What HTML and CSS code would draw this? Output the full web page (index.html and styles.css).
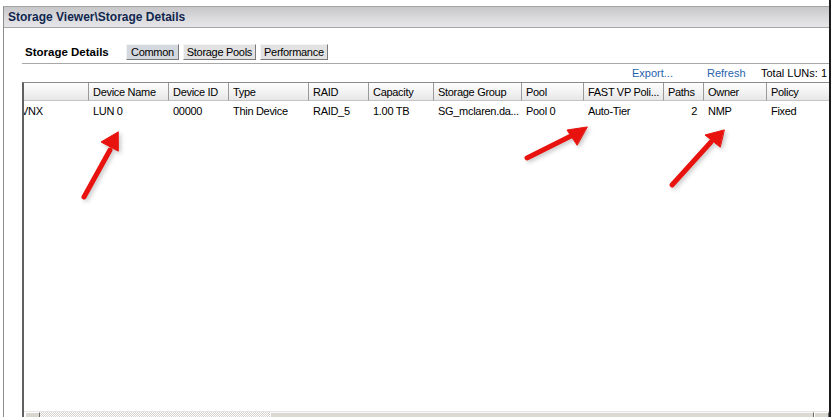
FILE: index.html
```html
<!DOCTYPE html>
<html lang="en">
<head>
    <meta charset="UTF-8">
    <title>Storage Viewer - Storage Details</title>
    <link rel="stylesheet" href="styles.css">
</head>
<body>
    <div class="frame">
        <div class="window">
            <!-- title bar -->
            <div class="titlebar">Storage Viewer\Storage Details</div>

            <div class="panel">
                <!-- heading + tabs -->
                <div class="panel-head">
                    <h2>Storage Details</h2>
                    <div class="tabs">
                        <span class="tab active">Common</span>
                        <span class="tab">Storage Pools</span>
                        <span class="tab">Performance</span>
                    </div>
                </div>

                <!-- toolbar -->
                <div class="toolbar">
                    <a href="#" class="export">Export...</a>
                    <a href="#" class="refresh">Refresh</a>
                    <span class="total">Total LUNs: 1</span>
                </div>

                <!-- LUN table -->
                <div class="grid">
                    <table>
                        <colgroup>
                            <col style="width:65px">
                            <col style="width:80px">
                            <col style="width:60px">
                            <col style="width:80px">
                            <col style="width:60px">
                            <col style="width:65px">
                            <col style="width:88px">
                            <col style="width:62px">
                            <col style="width:80px">
                            <col style="width:40px">
                            <col style="width:63px">
                            <col style="width:70px">
                        </colgroup>
                        <thead>
                            <tr>
                                <th></th>
                                <th>Device Name</th>
                                <th>Device ID</th>
                                <th>Type</th>
                                <th>RAID</th>
                                <th>Capacity</th>
                                <th>Storage Group</th>
                                <th>Pool</th>
                                <th>FAST VP Poli...</th>
                                <th>Paths</th>
                                <th>Owner</th>
                                <th>Policy</th>
                            </tr>
                        </thead>
                        <tbody>
                            <tr>
                                <td class="array">VNX</td>
                                <td>LUN 0</td>
                                <td>00000</td>
                                <td>Thin Device</td>
                                <td>RAID_5</td>
                                <td>1.00 TB</td>
                                <td>SG_mclaren.da...</td>
                                <td>Pool 0</td>
                                <td>Auto-Tier</td>
                                <td class="num">2</td>
                                <td>NMP</td>
                                <td>Fixed</td>
                            </tr>
                        </tbody>
                    </table>
                    <div class="filler"></div>

                    <!-- horizontal scrollbar -->
                    <div class="hscroll">
                        <span class="sb-btn left"></span>
                        <span class="sb-track first"></span>
                        <span class="sb-thumb"></span>
                        <span class="sb-track"></span>
                        <span class="sb-btn right"></span>
                    </div>
                </div>
            </div>
        </div>

        <!-- red annotation arrows -->
        <svg class="annotations" width="831" height="417" viewBox="0 0 831 417">
            <g fill="#e8130e" stroke="#e8130e" stroke-linecap="round">
                <line x1="84" y1="197" x2="110" y2="150" stroke-width="5"/>
                <polygon points="118,132 101,142 118,151" stroke-width="1"/>

                <line x1="527" y1="158" x2="571" y2="136" stroke-width="5"/>
                <polygon points="587,127 567,130 577,145" stroke-width="1"/>

                <line x1="672" y1="185" x2="711" y2="142" stroke-width="5"/>
                <polygon points="724,130 705,135 720,147" stroke-width="1"/>
            </g>
        </svg>
    </div>
</body>
</html>
```

FILE: styles.css
```css
* {
    box-sizing: border-box;
    margin: 0;
    padding: 0;
}

html, body {
    width: 831px;
    height: 417px;
    overflow: hidden;
    background: #ffffff;
}

body {
    font-family: "Liberation Sans", Arial, sans-serif;
    font-size: 11px;
    color: #000;
}

/* page frame with dark right edge */
.frame {
    position: relative;
    width: 831px;
    height: 417px;
    border-right: 2px solid #1b1b1b;
    overflow: hidden;
}

.window {
    margin-top: 6px;
    margin-left: 3px;
    border-top: 1px solid #a3a3a3;
    border-left: 1px solid #8e8e8e;
    height: 411px;
}

/* title bar */
.titlebar {
    height: 21px;
    padding-left: 4px;
    line-height: 20px;
    font-size: 12px;
    font-weight: bold;
    color: #10264f;
    background: linear-gradient(#c7c7c9, #dcdcde 60%, #e6e6e8);
    border-bottom: 1px solid #a6a6a8;
}

.panel {
    padding-left: 18px;
}

/* heading + tabs */
.panel-head {
    display: flex;
    align-items: center;
    margin-top: 16px;
    padding-bottom: 3px;
    border-bottom: 1px solid #a8a8a8;
}

.panel-head h2 {
    width: 104px;
    padding-left: 3px;
    font-size: 11.5px;
    font-weight: bold;
    line-height: 16px;
}

.tabs {
    display: flex;
    gap: 4px;
    letter-spacing: -0.3px;
}

.tab {
    height: 16px;
    line-height: 14px;
    padding: 0 3px;
    background: #e2e2e2;
    border: 1px solid #f4f4f4;
    border-right-color: #7a7a7a;
    border-bottom-color: #7a7a7a;
}

.tab.active {
    background: #d3d7de;
    padding: 0 4px 0 4px;
}

/* toolbar */
.toolbar {
    display: flex;
    align-items: center;
    height: 18px;
    padding-left: 610px;
    white-space: nowrap;
}

.toolbar a {
    color: #1f63ad;
    text-decoration: none;
}

.toolbar .export {
    width: 75px;
}

.toolbar .refresh {
    width: 54px;
}

/* table */
.grid {
    display: flex;
    flex-direction: column;
    height: 346px;
    border-top: 1px solid #8a8a8a;
    border-left: 2px solid #606060;
    overflow: hidden;
}

.grid table {
    table-layout: fixed;
    width: 813px;
    border-collapse: separate;
    border-spacing: 0;
    flex: none;
    letter-spacing: -0.3px;
}

.grid th {
    height: 18px;
    padding: 0 4px;
    text-align: left;
    font-weight: normal;
    white-space: nowrap;
    overflow: hidden;
    background: linear-gradient(#fdfdfd, #f1f1f1 60%, #e6e6e6);
    border-right: 1px solid #9a9a9a;
    border-bottom: 1px solid #c4c4c4;
}

.grid td {
    height: 18px;
    padding: 1px 2px 0 4px;
    white-space: nowrap;
    overflow: hidden;
}

.grid td.array {
    padding-left: 0;
    text-indent: -3px;
}

.grid td.num {
    text-align: right;
    padding-right: 7px;
}

.filler {
    flex: 1;
}

/* horizontal scrollbar */
.hscroll {
    display: flex;
    height: 17px;
    flex: none;
    border-top: 1px solid #e6e6e6;
}

.sb-btn {
    width: 15px;
    background: #d9d6cf;
    border: 1px solid #fff;
    border-right-color: #6e6e6e;
    border-bottom-color: #6e6e6e;
    position: relative;
}

.sb-btn.left {
    margin-left: 1px;
}

.sb-btn.left::after,
.sb-btn.right::after {
    content: "";
    position: absolute;
    top: 4px;
    left: 5px;
    border: 3px solid transparent;
}

.sb-btn.left::after {
    border-right: 3px solid #000;
    left: 2px;
}

.sb-btn.right::after {
    border-left: 3px solid #000;
}

.sb-track {
    flex: 1;
    background: repeating-conic-gradient(#d8d5ce 0 25%, #ffffff 0 50%) 0 0 / 2px 2px;
}

.sb-track.first {
    flex: none;
    width: 230px;
}

.sb-thumb {
    width: 545px;
    background: #dcd9d2;
    border: 1px solid #f8f8f8;
    border-right-color: #6a6a6a;
    border-bottom-color: #6a6a6a;
}

/* annotations overlay */
.annotations {
    position: absolute;
    top: 0;
    left: 0;
    pointer-events: none;
    filter: drop-shadow(2px 2px 2px rgba(0, 0, 0, 0.22));
}
```
